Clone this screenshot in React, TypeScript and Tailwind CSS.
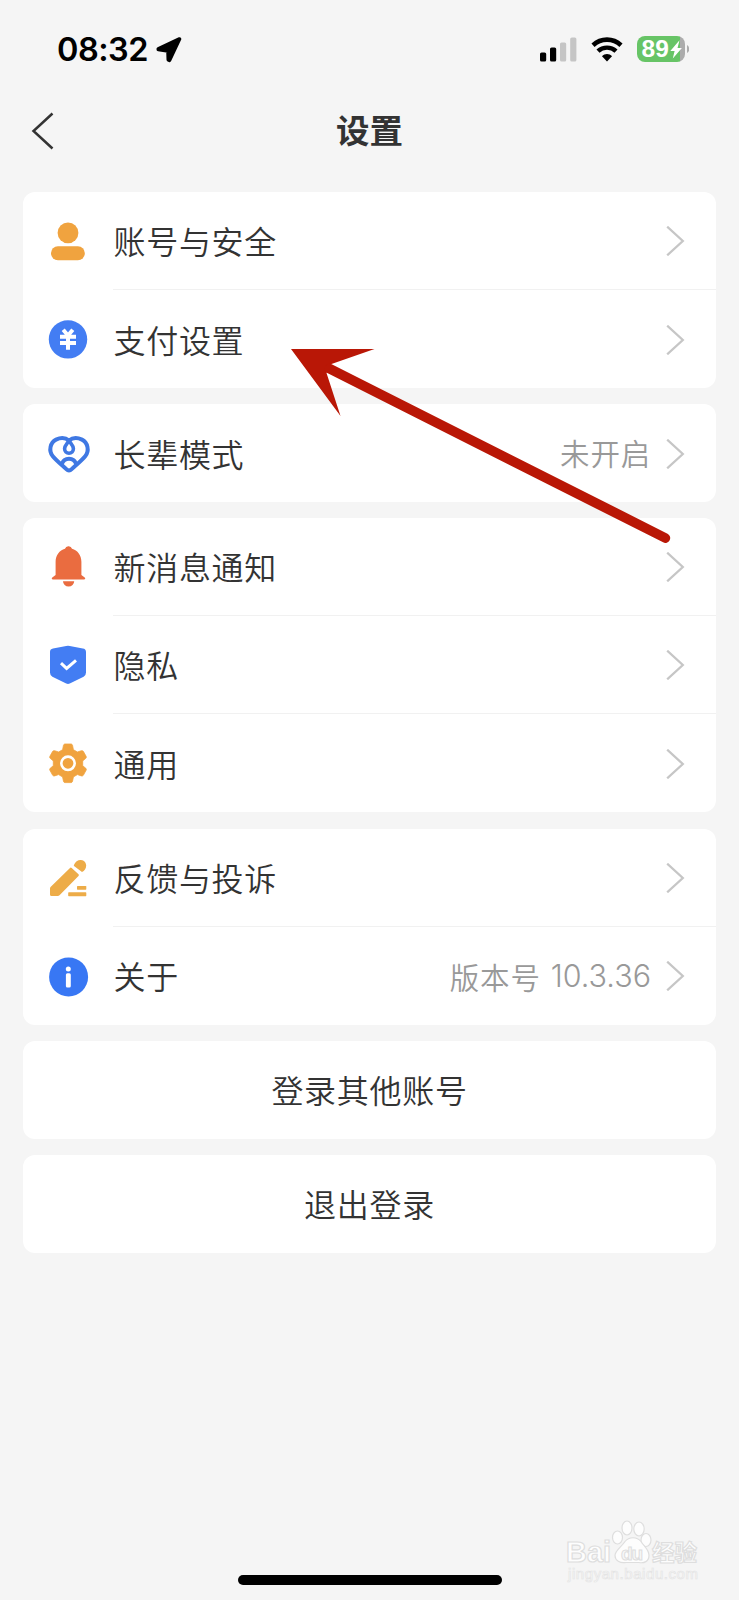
import React from 'react';

interface SettingItem {
  id: string;
  label: string;
  icon: React.ReactNode;
  value?: React.ReactNode;
}

const UserIcon = () => (
  <svg className="block h-10 w-10 overflow-visible" viewBox="0 0 40 40" fill="#f0a33f">
    <circle cx="20" cy="11.9" r="10.4" />
    <rect x="3" y="25.2" width="33.8" height="14" rx="6.9" />
  </svg>
);

const YuanIcon = () => (
  <svg className="block h-10 w-10 overflow-visible" viewBox="0 0 40 40">
    <circle cx="20" cy="20.4" r="19.2" fill="#437df3" />
    <path d="M15.2 10.8 20 16.5 24.8 10.8M12 17.8h16M12 24h16M20 17v13.8" fill="none" stroke="#fff" strokeWidth="4" />
  </svg>
);

const HeartIcon = () => (
  <svg className="block h-10 w-10 overflow-visible" viewBox="0 0 40 40" fill="none" stroke="#3f78e3" strokeWidth="4" strokeLinejoin="round">
    <path d="M21 7.6C17.8 4.8 12.6 4.4 8 6.6 2.4 9.4.2 17.6 4.8 23.2 8.4 27.6 14 32 18.6 36.4 20 37.8 22 37.8 23.4 36.4 28 32 33.6 27.6 37.2 23.2 41.8 17.6 39.6 9.4 34 6.6 29.4 4.4 24.2 4.8 21 7.6Z" />
    <path d="M21 7.6c-1.600 2.600-4.400 4.800-4.400 8.200a4.400 4.400 0 0 0 8.800 0c0-3.400-2.800-5.600-4.400-8.200Z" strokeWidth="3.600" />
    <path d="M13.800 31c1.200-3.600 3.800-5.200 7.200-5.200s6 1.600 7.200 5.200" />
  </svg>
);

const BellIcon = () => (
  <svg className="block h-10 w-10 overflow-visible" viewBox="0 0 40 40" fill="#ea6c40">
    <path d="M20.500-.8a3.500 3.500 0 0 1 3.500 2.500c5.600 1.500 9.400 6.500 9.400 13.100v13.200l3.300 2.600c1 .9.600 2-.7 2H5c-1.300 0-1.700-1.100-.7-2L7.600 28V14.800c0-6.600 3.800-11.600 9.400-13.100a3.500 3.500 0 0 1 3.500-2.500Z" />
    <path d="M15 34.200h11.200a5.600 5.400 0 0 1-11.200 0Z" />
  </svg>
);

const ShieldIcon = () => (
  <svg className="block h-10 w-10 overflow-visible" viewBox="0 0 40 40">
    <path d="M18.200.9a8 8 0 0 1 3.600 0l13 2.700a3.600 3.600 0 0 1 3.200 3.400v20.500a5 5 0 0 1-2.400 4.300L21.800 38.600a4 4 0 0 1-3.600 0L4.400 31.800A5 5 0 0 1 2 27.500V7a3.600 3.600 0 0 1 3-3.400Z" fill="#437df3" />
    <path d="m13 18.200 5.600 5.200 9.400-8" fill="none" stroke="#fff" strokeWidth="3" />
  </svg>
);

const GearIcon = () => (
  <svg className="block h-10 w-10 overflow-visible" viewBox="0 0 40 40">
    <path
      d="M15.500 2.200Q15.800 1.200 16.800 1h6.400q1 .2 1.300 1.200l.9 4.500 4 2.300 4-1.300q1.200-.3 1.900.6l2.900 5.200q.4 1-.4 1.800L34.700 17.900v4.800l3.100 2.600q.8.800.4 1.800l-2.900 5.200q-.7.900-1.900.6l-4-1.300-4 2.300-.9 4.500q-.3 1-1.300 1.200h-6.400q-1-.2-1.300-1.200l-.9-4.500-4-2.300-4 1.300q-1.200.3-1.900-.6l-2.900-5.200q-.4-1 .4-1.800l3.100-2.600v-4.800L2.200 15.300q-.8-.8-.4-1.800l2.900-5.200q.7-.9 1.900-.6l4 1.300 4-2.300Z"
      fill="#f0a33f"
      stroke="#f0a33f"
      strokeWidth=".8"
      strokeLinejoin="round"
    />
    <circle cx="20" cy="20.300" r="6.700" fill="none" stroke="#fff" strokeWidth="2.600" />
  </svg>
);

const PenIcon = () => (
  <svg className="block h-10 w-10 overflow-visible" viewBox="0 0 40 40" fill="#edac48">
    <path d="M22 9.900a1.200 1.200 0 0 1 1.700 0l6.800 6.300a1.200 1.200 0 0 1 0 1.700L11.500 37.200a2.500 2.500 0 0 1-1.700.8H3.500A1.500 1.500 0 0 1 2 36.500v-6a2.500 2.500 0 0 1 .8-1.800Z" />
    <path d="M25.800 7.200C27.200 3.600 30.300 1.700 33 2c3.200.300 5.300 2.700 5.200 5.800-.1 2.900-1.700 5.100-4.200 6.200L26 8Z" />
    <rect x="29" y="27.900" width="9.300" height="3.800" rx=".6" />
    <rect x="20.200" y="34.300" width="18.100" height="3.900" rx=".6" />
  </svg>
);

const InfoIcon = () => (
  <svg className="block h-10 w-10 overflow-visible" viewBox="0 0 40 40">
    <circle cx="20.600" cy="20.900" r="19.500" fill="#3877f4" />
    <circle cx="20.300" cy="12.900" r="2.500" fill="#fff" />
    <rect x="17.900" y="17.300" width="4.900" height="14.300" rx="1.500" fill="#fff" />
  </svg>
);

const groups: SettingItem[][] = [
  [
    { id: 'account', label: '账号与安全', icon: <UserIcon /> },
    { id: 'payment', label: '支付设置', icon: <YuanIcon /> },
  ],
  [{ id: 'elder', label: '长辈模式', icon: <HeartIcon />, value: '未开启' }],
  [
    { id: 'notice', label: '新消息通知', icon: <BellIcon /> },
    { id: 'privacy', label: '隐私', icon: <ShieldIcon /> },
    { id: 'general', label: '通用', icon: <GearIcon /> },
  ],
  [
    { id: 'feedback', label: '反馈与投诉', icon: <PenIcon /> },
    {
      id: 'about',
      label: '关于',
      icon: <InfoIcon />,
      value: (
        <span className="flex items-center gap-[10px] pt-[3px]">
          <span>版本号</span>
          <span className="font-[Inter,sans-serif] text-[30.500px] font-[350]! tracking-normal">10.3.36</span>
        </span>
      ),
    },
  ],
];

const StatusBar = () => (
  <div className="flex h-[98px] items-center pr-[50px] pl-[57px] text-black">
    <span className="w-[98.500px] pt-[2px] font-[Inter,sans-serif] text-[32.500px] leading-none font-semibold tracking-[-0.500px]">08:32</span>
    <svg className="mt-px h-[26px] w-[26px]" viewBox="0 0 26 26">
      <path d="M2.300 11.800 23.500 2 13.500 23.300 12.300 22.800 12 14 2.300 12.500Z" stroke="#000" strokeWidth="3.600" strokeLinejoin="round" />
    </svg>
    <div className="ml-auto flex items-center">
      <svg className="h-[25px] w-[37px]" viewBox="0 0 37 25">
        <rect x="0" y="15.500" width="6.200" height="9" rx="1.600" />
        <rect x="10" y="10.500" width="6.200" height="14" rx="1.600" />
        <rect x="20" y="5.500" width="6.200" height="19" rx="1.600" fill="#c5c5c5" />
        <rect x="30.200" y=".5" width="6.200" height="24" rx="1.600" fill="#c5c5c5" />
      </svg>
      <svg className="ml-[14px] h-[25px] w-[32px]" viewBox="0 0 32 25">
        <path d="M2 8.200C10 .8 22 .8 30 8.200" fill="none" stroke="#000" strokeWidth="4.600" />
        <path d="M7 14.200c5-4.800 13-4.800 18 0" fill="none" stroke="#000" strokeWidth="4.400" />
        <path d="M11 19.200c2.600-2.800 7.400-2.800 10 0L16 24.500Z" />
      </svg>
      <div className="ml-[14px] flex h-[26px] w-[48px] items-center overflow-hidden rounded-[8px] bg-[linear-gradient(90deg,#67c466_90%,#acacac_90%)] pl-[4.500px]">
        <span className="w-[28.500px] pt-px font-['Liberation_Sans',sans-serif] text-[24.500px] leading-none font-bold text-white">89</span>
        <svg className="h-[19px] w-[12px]" viewBox="0 0 12 19" fill="#fff">
          <path d="M9.500.3.300 11h4.300L2.800 18.500 11.900 8H7.500Z" />
        </svg>
      </div>
      <svg className="ml-[2px] h-[8px] w-[2px]" viewBox="0 0 2 8">
        <path d="M0 0a4.600 4.600 0 0 1 0 8Z" fill="#acacac" />
      </svg>
    </div>
  </div>
);

const Chevron = () => (
  <svg className="mt-px block h-[30px] w-[19px]" viewBox="0 0 19 30">
    <path d="M1.200.7 16.800 15 1.200 29.300" fill="none" stroke="#c6c6c6" strokeWidth="2.300" />
  </svg>
);

const SettingRow: React.FC<{ item: SettingItem; last: boolean }> = ({ item, last }) => (
  <div className="flex h-[98px] pl-[25px]">
    <div className="flex w-[40px] items-center">{item.icon}</div>
    <div className={`ml-[25px] flex flex-1 items-center pr-[31px] ${last ? '' : 'border-b border-[#f1f1f1]'}`}>
      <span className="pb-[1px] pl-[0.500px] text-[32px] leading-none font-[350] tracking-[0.700px] text-[#333]">{item.label}</span>
      <span className="ml-auto pb-[1px] text-[29.500px] leading-none font-[350] tracking-[0.800px] text-[#999]">{item.value}</span>
      <span className="ml-[15px]">
        <Chevron />
      </span>
    </div>
  </div>
);

const ActionButton: React.FC<{ children: React.ReactNode }> = ({ children }) => (
  <button className="flex h-[98px] w-full items-center justify-center rounded-[12px] bg-white pb-px text-[32px] leading-none font-[350] tracking-[0.700px] text-[#333]">
    {children}
  </button>
);

const Watermark = () => (
  <svg className="absolute right-[34px] bottom-[12px] h-[70px] w-[140px]" viewBox="0 0 140 70" fill="#fdfdfd" stroke="#dedede" strokeWidth="1.200">
    <text x="1" y="43.500" fontFamily="Liberation Sans" fontWeight="700" fontSize="30" textLength="45" lengthAdjust="spacingAndGlyphs">Bai</text>
    <ellipse cx="52.500" cy="19.500" rx="5" ry="6.500" />
    <ellipse cx="62" cy="10" rx="5" ry="7" />
    <ellipse cx="74" cy="11" rx="5.200" ry="7" />
    <ellipse cx="81" cy="22" rx="5" ry="6.500" />
    <path d="M60 23.500c4-5 12-5 16 0 3 5 8 8 8 14s-5 8-10 7H61c-6 1-11-2-11-7s6-8 10-14Z" />
    <text x="56" y="42" fontFamily="Liberation Sans" fontWeight="700" fontSize="19" textLength="22" fill="#f8f8f8" strokeWidth="1">du</text>
    <text x="87" y="42.500" fontFamily="Noto Sans CJK SC" fontWeight="700" fontSize="22.500" textLength="45">经验</text>
    <text x="3" y="61" fontFamily="Liberation Sans" fontSize="15" textLength="130" stroke="#e4e4e4" strokeWidth=".7">jingyan.baidu.com</text>
  </svg>
);

export default function App() {
  return (
    <div className="relative h-[1600px] w-[739px] overflow-hidden bg-[#f5f5f5] font-['Noto_Sans_CJK_SC',sans-serif]">
      <StatusBar />

      <header className="flex h-[94px] items-start px-[31px] pt-[14px]">
        <svg className="h-[38px] w-[23px]" viewBox="0 0 23 38">
          <path d="M21.500 1.500 2.500 19l19 17.500" fill="none" stroke="#333" strokeWidth="2.500" />
        </svg>
        <h1 className="-mt-px flex-1 pr-[23px] text-center text-[33.500px] leading-[36px] font-bold text-[#333]">设置</h1>
      </header>

      <main className="flex flex-col gap-[16.200px] px-[23px]">
        {groups.map((group) => (
          <section key={group[0].id} className="rounded-[12px] bg-white">
            {group.map((item, index) => (
              <SettingRow key={item.id} item={item} last={index === group.length - 1} />
            ))}
          </section>
        ))}
        <ActionButton>登录其他账号</ActionButton>
        <ActionButton>退出登录</ActionButton>
      </main>

      {/* arrow pointing at the payment settings row */}
      <svg className="pointer-events-none absolute top-[340px] left-[280px] h-[210px] w-[400px]" viewBox="280 340 400 210">
        <path d="M291 349h83.500L331.500 364l-5 9 14 43Z" fill="#b91706" />
        <path d="M329.500 368.600 665.300 538" stroke="#b91706" strokeWidth="9.800" strokeLinecap="round" />
      </svg>

      <Watermark />
      <div className="absolute bottom-[15px] left-[238px] h-[10px] w-[264px] rounded-full bg-black" />
    </div>
  );
}
